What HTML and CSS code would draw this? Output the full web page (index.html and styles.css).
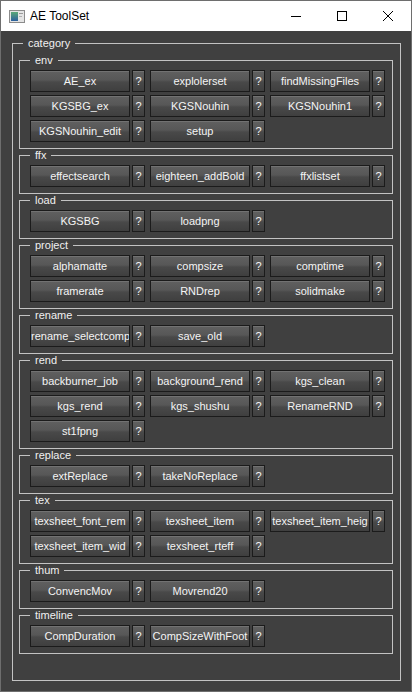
FILE: index.html
```html
<!DOCTYPE html>
<html>
<head>
<meta charset="utf-8">
<title>AE ToolSet</title>
<link rel="stylesheet" href="styles.css">
</head>
<body>
<div class="window">
  <div class="titlebar">
    <svg class="appicon" width="16" height="13" viewBox="0 0 16 13">
      <defs>
        <linearGradient id="ig" x1="0" y1="0" x2="0" y2="1">
          <stop offset="0" stop-color="#5aa878"/>
          <stop offset="1" stop-color="#2b5f9e"/>
        </linearGradient>
      </defs>
      <rect x="0.5" y="0.5" width="15" height="12" fill="#e4e4e4" stroke="#8c8c8c"/>
      <rect x="2" y="2" width="7" height="9" fill="url(#ig)"/>
      <rect x="10" y="3" width="4" height="1" fill="#9a9a9a"/>
      <rect x="10" y="6" width="3" height="1" fill="#b0b0b0"/>
    </svg>
    <span class="title">AE ToolSet</span>
    <div class="controls">
      <span class="ctl"><svg width="10" height="10" viewBox="0 0 10 10"><line x1="0" y1="5.5" x2="10" y2="5.5" stroke="#000" stroke-width="1"/></svg></span>
      <span class="ctl"><svg width="10" height="10" viewBox="0 0 10 10"><rect x="0.5" y="0.5" width="9" height="9" fill="none" stroke="#000" stroke-width="1"/></svg></span>
      <span class="ctl"><svg width="10" height="10" viewBox="0 0 10 10"><path d="M0 0 L10 10 M10 0 L0 10" stroke="#000" stroke-width="1"/></svg></span>
    </div>
  </div>
  <div class="client">
    <fieldset class="group category">
      <legend>category</legend>

      <fieldset class="group sub">
        <legend>env</legend>
        <div class="grid">
          <div class="item"><button class="btn main">AE_ex</button><button class="btn help">?</button></div>
          <div class="item"><button class="btn main">explolerset</button><button class="btn help">?</button></div>
          <div class="item"><button class="btn main">findMissingFiles</button><button class="btn help">?</button></div>
          <div class="item"><button class="btn main">KGSBG_ex</button><button class="btn help">?</button></div>
          <div class="item"><button class="btn main">KGSNouhin</button><button class="btn help">?</button></div>
          <div class="item"><button class="btn main">KGSNouhin1</button><button class="btn help">?</button></div>
          <div class="item"><button class="btn main">KGSNouhin_edit</button><button class="btn help">?</button></div>
          <div class="item"><button class="btn main">setup</button><button class="btn help">?</button></div>
        </div>
      </fieldset>

      <fieldset class="group sub">
        <legend>ffx</legend>
        <div class="grid">
          <div class="item"><button class="btn main">effectsearch</button><button class="btn help">?</button></div>
          <div class="item"><button class="btn main">eighteen_addBold</button><button class="btn help">?</button></div>
          <div class="item"><button class="btn main">ffxlistset</button><button class="btn help">?</button></div>
        </div>
      </fieldset>

      <fieldset class="group sub">
        <legend>load</legend>
        <div class="grid">
          <div class="item"><button class="btn main">KGSBG</button><button class="btn help">?</button></div>
          <div class="item"><button class="btn main">loadpng</button><button class="btn help">?</button></div>
        </div>
      </fieldset>

      <fieldset class="group sub">
        <legend>project</legend>
        <div class="grid">
          <div class="item"><button class="btn main">alphamatte</button><button class="btn help">?</button></div>
          <div class="item"><button class="btn main">compsize</button><button class="btn help">?</button></div>
          <div class="item"><button class="btn main">comptime</button><button class="btn help">?</button></div>
          <div class="item"><button class="btn main">framerate</button><button class="btn help">?</button></div>
          <div class="item"><button class="btn main">RNDrep</button><button class="btn help">?</button></div>
          <div class="item"><button class="btn main">solidmake</button><button class="btn help">?</button></div>
        </div>
      </fieldset>

      <fieldset class="group sub">
        <legend>rename</legend>
        <div class="grid">
          <div class="item"><button class="btn main">rename_selectcomp</button><button class="btn help">?</button></div>
          <div class="item"><button class="btn main">save_old</button><button class="btn help">?</button></div>
        </div>
      </fieldset>

      <fieldset class="group sub">
        <legend>rend</legend>
        <div class="grid">
          <div class="item"><button class="btn main">backburner_job</button><button class="btn help">?</button></div>
          <div class="item"><button class="btn main">background_rend</button><button class="btn help">?</button></div>
          <div class="item"><button class="btn main">kgs_clean</button><button class="btn help">?</button></div>
          <div class="item"><button class="btn main">kgs_rend</button><button class="btn help">?</button></div>
          <div class="item"><button class="btn main">kgs_shushu</button><button class="btn help">?</button></div>
          <div class="item"><button class="btn main">RenameRND</button><button class="btn help">?</button></div>
          <div class="item"><button class="btn main">st1fpng</button><button class="btn help">?</button></div>
        </div>
      </fieldset>

      <fieldset class="group sub">
        <legend>replace</legend>
        <div class="grid">
          <div class="item"><button class="btn main">extReplace</button><button class="btn help">?</button></div>
          <div class="item"><button class="btn main">takeNoReplace</button><button class="btn help">?</button></div>
        </div>
      </fieldset>

      <fieldset class="group sub">
        <legend>tex</legend>
        <div class="grid">
          <div class="item"><button class="btn main">texsheet_font_rem</button><button class="btn help">?</button></div>
          <div class="item"><button class="btn main">texsheet_item</button><button class="btn help">?</button></div>
          <div class="item"><button class="btn main">texsheet_item_heig</button><button class="btn help">?</button></div>
          <div class="item"><button class="btn main">texsheet_item_wid</button><button class="btn help">?</button></div>
          <div class="item"><button class="btn main">texsheet_rteff</button><button class="btn help">?</button></div>
        </div>
      </fieldset>

      <fieldset class="group sub">
        <legend>thum</legend>
        <div class="grid">
          <div class="item"><button class="btn main">ConvencMov</button><button class="btn help">?</button></div>
          <div class="item"><button class="btn main">Movrend20</button><button class="btn help">?</button></div>
        </div>
      </fieldset>

      <fieldset class="group sub">
        <legend>timeline</legend>
        <div class="grid">
          <div class="item"><button class="btn main">CompDuration</button><button class="btn help">?</button></div>
          <div class="item"><button class="btn main">CompSizeWithFoot</button><button class="btn help">?</button></div>
        </div>
      </fieldset>
    </fieldset>
  </div>
</div>
</body>
</html>
```
FILE: styles.css
```css
html, body {
  margin: 0;
  padding: 0;
  background: #404040;
}

.window {
  box-sizing: border-box;
  width: 412px;
  height: 692px;
  border: 1px solid #6e6e6e;
  display: flex;
  flex-direction: column;
  background: #404040;
  font-family: "Liberation Sans", Arial, sans-serif;
}

.titlebar {
  height: 30px;
  flex: none;
  background: #ffffff;
  display: flex;
  align-items: center;
}

.appicon {
  margin-left: 8px;
  margin-top: 1px;
  flex: none;
}

.title {
  margin-left: 5px;
  font-size: 12px;
  color: #000;
}

.controls {
  margin-left: auto;
  display: flex;
  height: 100%;
}

.ctl {
  width: 46px;
  height: 100%;
  display: flex;
  align-items: center;
  justify-content: center;
}

.ctl svg {
  display: block;
}

.client {
  flex: 1;
  display: flex;
  flex-direction: column;
  padding: 6px 10px 10px 11px;
  min-height: 0;
}

.group {
  margin: 0;
  border: 1px solid #c3c3c3;
  min-inline-size: 0;
}

.group > legend {
  font-size: 11px;
  line-height: 13px;
  height: 13px;
  color: #f0f0f0;
  padding: 0 5px;
}

.category {
  flex: 1;
  padding: 4px 7px 0 6px;
}

.category > legend {
  margin-left: 4px;
}

.sub {
  padding: 3px 6px 6px 10px;
}

.sub > legend {
  margin-left: 0;
}

.grid {
  display: grid;
  grid-template-columns: repeat(3, 115px);
  column-gap: 5px;
  row-gap: 3px;
}

.item {
  display: flex;
  gap: 2px;
}

.btn {
  box-sizing: border-box;
  height: 22px;
  margin: 0;
  padding: 0;
  border: 1px solid #1b1b1b;
  border-radius: 0;
  background: linear-gradient(#606060 0%, #575757 45%, #494949 55%, #3f3f3f 100%);
  box-shadow: inset 0 1px 0 #727272;
  color: #f4f4f4;
  font-family: "Liberation Sans", Arial, sans-serif;
  font-size: 11px;
  white-space: nowrap;
  overflow: hidden;
  text-align: center;
}

.main {
  width: 100px;
}

.help {
  width: 13px;
}
```
